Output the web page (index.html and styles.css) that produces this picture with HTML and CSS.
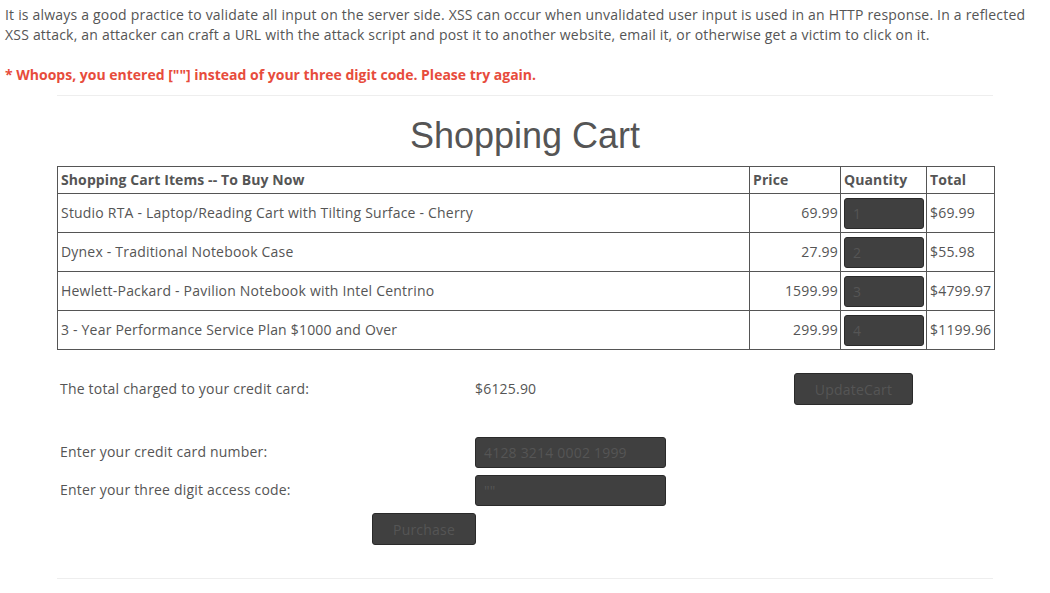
FILE: index.html
```html
<!DOCTYPE html>
<html>
<head>
<meta charset="utf-8">
<link rel="stylesheet" href="styles.css">
</head>
<body>
<p class="intro">It is always a good practice to validate all input on the server side. XSS can occur when unvalidated user input is used in an HTTP response. In a reflected XSS attack, an attacker can craft a URL with the attack script and post it to another website, email it, or otherwise get a victim to click on it.</p>
<p class="error">* Whoops, you entered [""] instead of your three digit code. Please try again.</p>
<div class="wrap">
  <hr class="rule">
  <h1 class="title">Shopping Cart</h1>
  <table class="cart">
    <colgroup>
      <col class="c-item"><col class="c-price"><col class="c-qty"><col class="c-total">
    </colgroup>
    <thead>
      <tr><th>Shopping Cart Items -- To Buy Now</th><th>Price</th><th>Quantity</th><th>Total</th></tr>
    </thead>
    <tbody>
      <tr><td>Studio RTA - Laptop/Reading Cart with Tilting Surface - Cherry</td><td class="num">69.99</td><td class="qty"><input class="field qin" value="1"></td><td>$69.99</td></tr>
      <tr><td>Dynex - Traditional Notebook Case</td><td class="num">27.99</td><td class="qty"><input class="field qin" value="2"></td><td>$55.98</td></tr>
      <tr><td>Hewlett-Packard - Pavilion Notebook with Intel Centrino</td><td class="num">1599.99</td><td class="qty"><input class="field qin" value="3"></td><td>$4799.97</td></tr>
      <tr><td>3 - Year Performance Service Plan $1000 and Over</td><td class="num">299.99</td><td class="qty"><input class="field qin" value="4"></td><td>$1199.96</td></tr>
    </tbody>
  </table>
  <table class="pay">
    <colgroup>
      <col class="p1"><col class="p2"><col class="p3">
    </colgroup>
    <tr class="r-total"><td>The total charged to your credit card:</td><td>$6125.90</td><td><button class="btn b-update">UpdateCart</button></td></tr>
    <tr class="r-space"><td colspan="3"></td></tr>
    <tr class="r-in"><td>Enter your credit card number:</td><td><input class="field wide" value="4128 3214 0002 1999"></td><td></td></tr>
    <tr class="r-in"><td>Enter your three digit access code:</td><td><input class="field wide" value="&quot;&quot;"></td><td></td></tr>
    <tr class="r-buy"><td colspan="2" class="center"><button class="btn b-buy">Purchase</button></td><td></td></tr>
  </table>
  <hr class="rule bottom">
</div>
</body>
</html>
```
FILE: styles.css
```css
html, body {
  margin: 0;
  background: #fff;
}
body {
  padding: 5px 5px 0;
  font-family: "Open Sans", "DejaVu Sans", sans-serif;
  font-size: 14px;
  line-height: 20px;
  letter-spacing: 0.2px;
  color: #555;
}
.intro {
  margin: 0 0 20px;
}
.error {
  margin: 0;
  color: #e74c3c;
  font-weight: bold;
  letter-spacing: 0;
}
.wrap {
  width: 90%;
  margin: 0 auto;
}
.rule {
  border: 0;
  border-top: 1px solid #eee;
  margin: 10px 0 0;
  height: 0;
}
.title {
  margin: 20px 0 0;
  font-family: "Liberation Sans", Arial, sans-serif;
  font-weight: normal;
  font-size: 36px;
  line-height: 40px;
  letter-spacing: 0;
  text-align: center;
  color: #555;
}
.cart {
  margin-top: 10px;
  width: 937px;
  border-collapse: collapse;
  table-layout: fixed;
}
.c-item { width: 692px; }
.c-price { width: 91px; }
.c-qty { width: 86px; }
.c-total { width: 68px; }
.cart th, .cart td {
  border: 1px solid #555;
  padding: 0 3px;
  text-align: left;
  white-space: nowrap;
}
.cart th {
  height: 26px;
  font-weight: bold;
  letter-spacing: 0.1px;
}
.cart td {
  height: 38px;
}
.cart td.num {
  text-align: right;
  padding-right: 2px;
}
.cart td.qty {
  padding: 0 2px 0 3px;
}
.field {
  box-sizing: border-box;
  background: #404040;
  border: 1px solid #2a2a2a;
  border-radius: 3px;
  color: #555;
  font-family: "Open Sans", "DejaVu Sans", sans-serif;
  font-size: 14px;
  letter-spacing: 0.2px;
  padding: 0 8px;
  display: block;
  outline: none;
}
.qin {
  width: 80px;
  height: 31px;
}
.wide {
  width: 191px;
  height: 31px;
}
.pay {
  margin-top: 19px;
  width: 937px;
  border-collapse: collapse;
  table-layout: fixed;
}
.p1 { width: 415px; }
.p2 { width: 319px; }
.p3 { width: 203px; }
.pay td {
  padding: 0 3px;
  vertical-align: middle;
}
.r-total td { height: 40px; }
.r-space td { height: 24px; }
.r-in td { height: 38px; }
.r-buy td { height: 40px; }
.center { text-align: center; }
.btn {
  box-sizing: border-box;
  height: 32px;
  background: #404040;
  border: 1px solid #2a2a2a;
  border-radius: 3px;
  color: #555;
  font-family: "Open Sans", "DejaVu Sans", sans-serif;
  font-size: 14px;
  letter-spacing: 0.2px;
  padding: 0;
}
.b-update { width: 119px; }
.b-buy { width: 104px; }
.bottom {
  margin-top: 29px;
}
```
